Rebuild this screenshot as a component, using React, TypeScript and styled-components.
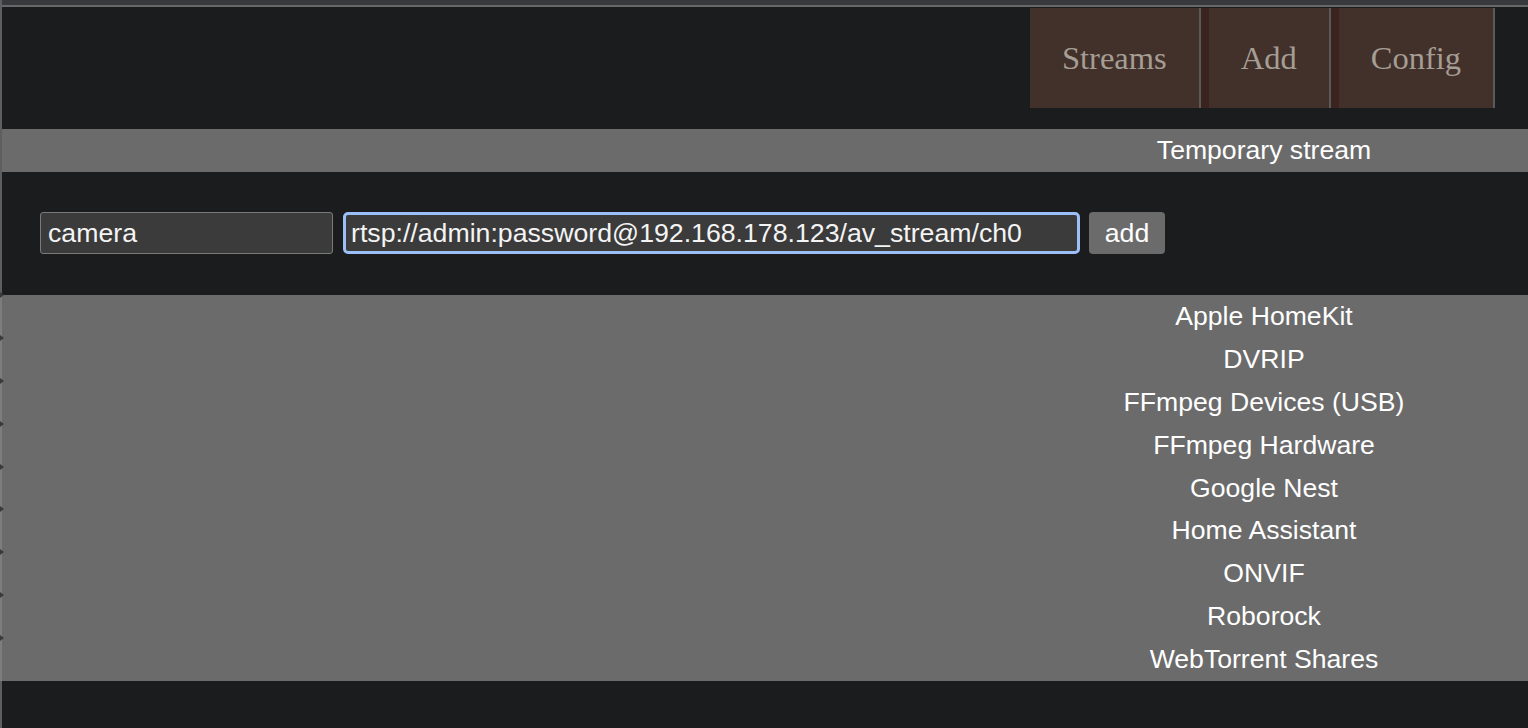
import React from "react";
import styled, { createGlobalStyle } from "styled-components";

const GlobalStyle = createGlobalStyle`
  html, body {
    margin: 0;
    padding: 0;
    background: #1b1c1e;
    overflow: hidden;
  }
  * { box-sizing: border-box; }
`;

const Frame = styled.div`
  min-height: 728px;
  border-left: 2px solid #5e5e60;
  display: flex;
  flex-direction: column;
  font-family: "Liberation Sans", Arial, sans-serif;
`;

const TopStrip = styled.div`
  height: 7px;
  background: #38393d;
  border-bottom: 2px solid #68686a;
`;

const Header = styled.header`
  display: flex;
  justify-content: flex-end;
  padding-right: 33px;
  margin-top: 1px;
`;

const Nav = styled.nav`
  display: flex;
  height: 100px;
`;

const NavLink = styled.a<{ $first?: boolean }>`
  display: flex;
  align-items: center;
  justify-content: center;
  padding: 0 32px 0 32px;
  background: #42302b;
  border-right: 2px solid #5a5a5a;
  border-left: ${(p) => (p.$first ? "none" : "8px solid #3b231f")};
  color: #a59e94;
  font-family: "Liberation Serif", "Times New Roman", serif;
  font-size: 32.5px;
  text-decoration: none;
  cursor: pointer;
`;

const Bar = styled.div`
  position: relative;
  background: #6b6b6b;
  color: #ffffff;
  font-size: 26.6px;
  text-align: center;
  padding-left: 998px;
`;

const TitleBar = styled(Bar)`
  margin-top: 21px;
  height: 43px;
  line-height: 42px;
`;

const FormRow = styled.form`
  display: flex;
  align-items: flex-start;
  padding: 40px 0 0 38px;
  height: 123px;
`;

const TextInput = styled.input<{ $width: number; $focused?: boolean }>`
  width: ${(p) => p.$width}px;
  height: 42px;
  margin-right: ${(p) => (p.$focused ? 9 : 10)}px;
  background: #3b3b3b;
  color: #f4f4f4;
  font-family: "Liberation Sans", Arial, sans-serif;
  font-size: 26.7px;
  border: ${(p) => (p.$focused ? "3px solid #9cbff7" : "1px solid #7a7a7a")};
  border-radius: ${(p) => (p.$focused ? 5 : 3)}px;
  padding: 0 ${(p) => (p.$focused ? 5 : 7)}px;
  outline: none;
`;

const AddButton = styled.button`
  width: 76px;
  height: 42px;
  background: #6b6b6b;
  color: #ffffff;
  font-family: "Liberation Sans", Arial, sans-serif;
  font-size: 26.7px;
  border: none;
  border-radius: 4px;
  padding: 0;
  cursor: pointer;
`;

const SourceList = styled.div`
  display: flex;
  flex-direction: column;
  background: #6b6b6b;
  border-left: 2px solid #7d7d7d;
  margin-left: -2px;
`;

const SourceRow = styled(Bar)`
  height: 42.9px;
  line-height: 42px;
  padding-left: 998px;
  cursor: pointer;

  &::before {
    content: "";
    position: absolute;
    left: -2px;
    top: -3px;
    border-top: 3px solid transparent;
    border-bottom: 3px solid transparent;
    border-left: 4px solid #3a3a3a;
  }
`;

const sources = [
  "Apple HomeKit",
  "DVRIP",
  "FFmpeg Devices (USB)",
  "FFmpeg Hardware",
  "Google Nest",
  "Home Assistant",
  "ONVIF",
  "Roborock",
  "WebTorrent Shares",
];

export default function App() {
  return (
    <>
      <GlobalStyle />
      <Frame>
        <TopStrip />
        <Header>
          <Nav>
            <NavLink $first>Streams</NavLink>
            <NavLink>Add</NavLink>
            <NavLink>Config</NavLink>
          </Nav>
        </Header>
        <TitleBar>Temporary stream</TitleBar>
        <FormRow onSubmit={(e) => e.preventDefault()}>
          <TextInput $width={293} defaultValue="camera" />
          <TextInput
            $width={737}
            $focused
            defaultValue="rtsp://admin:password@192.168.178.123/av_stream/ch0"
          />
          <AddButton type="submit">add</AddButton>
        </FormRow>
        <SourceList>
          {sources.map((s) => (
            <SourceRow key={s}>{s}</SourceRow>
          ))}
        </SourceList>
      </Frame>
    </>
  );
}
